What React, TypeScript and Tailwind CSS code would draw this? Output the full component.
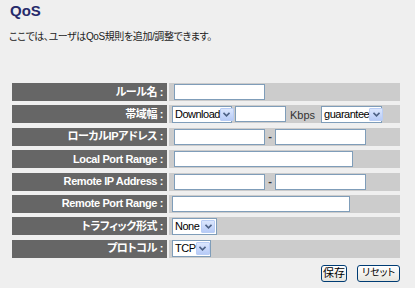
import React from "react";

const FONT = "font-['Liberation_Sans','Noto_Sans_CJK_JP',sans-serif]";

function Input({ w }: { w: number }) {
  return (
    <div
      className="h-[16px] border border-[#7f9db9] bg-white shrink-0"
      style={{ width: w }}
    />
  );
}

function Select({ w, text }: { w: number; text: string }) {
  return (
    <div
      className="h-[17px] border border-[#7f9db9] bg-white flex items-center shrink-0"
      style={{ width: w }}
    >
      <span className="flex-1 pl-[2px] text-[11px] tracking-[-0.5px] leading-none text-black whitespace-nowrap">
        {text}
      </span>
      <div className="w-[14px] h-[13px] mr-[1px] rounded-[1px] border border-[#b9cdf5] bg-gradient-to-b from-[#dbe6fd] to-[#b7cbf7] flex items-center justify-center shrink-0">
        <svg width="7" height="5" viewBox="0 0 7 5">
          <path d="M0.5 0.8 L3.5 3.8 L6.5 0.8" stroke="#4d6185" strokeWidth="1.6" fill="none" />
        </svg>
      </div>
    </div>
  );
}

function Row({ label, children, pl }: { label: string; children?: React.ReactNode; pl: number }) {
  return (
    <div className="flex h-[18px] gap-x-[2px]">
      <div className="w-[155px] bg-[#666666] flex items-center justify-end pr-[4px] text-white font-bold text-[11px] tracking-[-0.4px] leading-none whitespace-nowrap [font-feature-settings:'palt']">
        {label}
      </div>
      <div className="flex-1 bg-[#cccccc] flex items-center" style={{ paddingLeft: pl }}>
        {children}
      </div>
    </div>
  );
}

export default function App() {
  return (
    <div className={`w-[415px] h-[288px] bg-[#efefef] overflow-hidden ${FONT}`}>
      <div className="pl-[10px] pt-[2px] text-[15px] font-bold text-[#262a6b] leading-[18px]">QoS</div>
      <div className="pl-[9px] mt-[10px] text-[10px] tracking-[-0.4px] leading-[14px] text-[#222] [font-feature-settings:'palt'] whitespace-nowrap">
        ここでは、ユーザはQoS規則を追加/調整できます。
      </div>
      <div className="ml-[12px] mt-[39px] w-[388px] flex flex-col gap-y-[4.4px]">
        <Row label="ルール名 :" pl={5}>
          <Input w={91} />
        </Row>
        <Row label="帯域幅 :" pl={3}>
          <Select w={60} text="Download" />
          <div className="ml-[3px]">
            <Input w={51} />
          </div>
          <span className="ml-[4px] text-[11px] text-[#333] leading-none pt-[2px]">Kbps</span>
          <div className="ml-[6px]">
            <Select w={61} text="guarantee" />
          </div>
        </Row>
        <Row label="ローカルIPアドレス :" pl={5}>
          <Input w={91} />
          <span className="w-[10px] text-center text-[11px] font-bold text-[#333] leading-none">-</span>
          <Input w={91} />
        </Row>
        <Row label="Local Port Range :" pl={5}>
          <Input w={179} />
        </Row>
        <Row label="Remote IP Address :" pl={5}>
          <Input w={91} />
          <span className="w-[10px] text-center text-[11px] font-bold text-[#333] leading-none">-</span>
          <Input w={91} />
        </Row>
        <Row label="Remote Port Range :" pl={3}>
          <Input w={178} />
        </Row>
        <Row label="トラフィック形式 :" pl={3}>
          <Select w={45} text="None" />
        </Row>
        <Row label="プロトコル :" pl={3}>
          <Select w={39} text="TCP" />
        </Row>
      </div>
      <div className="w-[400px] flex justify-end gap-x-[10px] mt-[7px]">
        <button className="h-[17px] w-[26px] px-0 rounded-[3px] border border-[#003c74] bg-gradient-to-b from-white to-[#e6e5de] text-[11px] leading-none text-black flex items-center justify-center whitespace-nowrap [font-feature-settings:'palt']">
          保存
        </button>
        <button className="h-[17px] w-[43px] px-0 rounded-[3px] border border-[#003c74] bg-gradient-to-b from-white to-[#e6e5de] text-[10px] leading-none text-black flex items-center justify-center whitespace-nowrap [font-feature-settings:'palt']">
          リセット
        </button>
      </div>
    </div>
  );
}
